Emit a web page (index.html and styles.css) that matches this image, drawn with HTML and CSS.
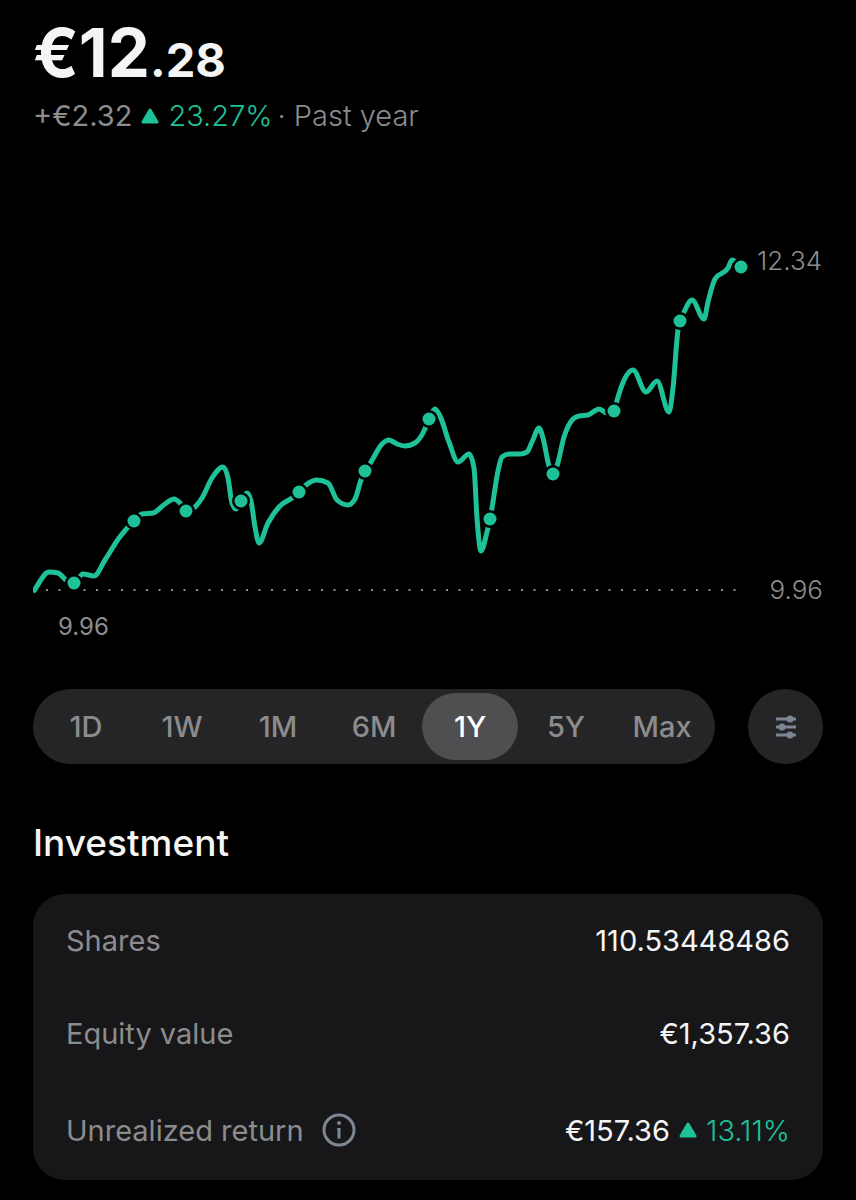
FILE: index.html
```html
<!DOCTYPE html>
<html lang="en">
<head>
  <meta charset="UTF-8" />
  <meta name="viewport" content="width=device-width, initial-scale=1" />
  <title>Stock Details</title>
  <link rel="stylesheet" href="styles.css">
</head>
<body>

  <header>
    <h1 class="price">€12<span class="cents">.28</span></h1>
    <p class="change">
      <span class="amount">+€2.32</span>
      <svg class="arrow" viewBox="0 0 18 16" aria-hidden="true"><path d="M9 2 L16 14 H2 Z" /></svg>
      <span class="up">23.27%</span>
      <span>· Past year</span>
    </p>
  </header>

  <main>
    <svg class="chart" viewBox="33 240 790 410" role="img" aria-label="Price over the past year">
      <line class="baseline" x1="46" y1="590" x2="736" y2="590" />
      <path class="line" id="priceLine" />
      <g class="dots" id="priceDots"></g>
      <text class="label" x="822" y="270" text-anchor="end">12.34</text>
      <text class="label" x="823" y="599" text-anchor="end">9.96</text>
      <text class="label small" x="58" y="635">9.96</text>
    </svg>

    <div class="controls">
      <div class="ranges">
        <button type="button">1D</button>
        <button type="button">1W</button>
        <button type="button">1M</button>
        <button type="button">6M</button>
        <button type="button" class="active">1Y</button>
        <button type="button">5Y</button>
        <button type="button">Max</button>
      </div>
      <button type="button" class="settings" aria-label="Chart settings">
        <svg viewBox="0 0 22 24" aria-hidden="true">
          <path d="M1 4 H21 M1 12 H21 M1 20 H21" />
          <circle cx="15" cy="4" r="3.5" />
          <circle cx="7" cy="12" r="3.5" />
          <circle cx="15" cy="20" r="3.5" />
        </svg>
      </button>
    </div>

    <h2>Investment</h2>
    <dl class="card">
      <div class="row">
        <dt>Shares</dt>
        <dd>110.53448486</dd>
      </div>
      <div class="row">
        <dt>Equity value</dt>
        <dd>€1,357.36</dd>
      </div>
      <div class="row">
        <dt>
          Unrealized return
          <button type="button" class="info" aria-label="About unrealized return">
            <svg viewBox="0 0 34 34" aria-hidden="true">
              <circle class="ring" cx="17" cy="17" r="15" />
              <circle cx="17" cy="10" r="2" />
              <path d="M15 15 H18.5 V25.5 H15.5 V16.5 H15 Z" />
            </svg>
          </button>
        </dt>
        <dd>
          €157.36
          <svg class="arrow" viewBox="0 0 18 16" aria-hidden="true"><path d="M9 2 L16 14 H2 Z" /></svg>
          <span class="up">13.11%</span>
        </dd>
      </div>
    </dl>
  </main>

  <script src="chart.js"></script>
</body>
</html>
```

FILE: styles.css
```css
* { box-sizing: border-box; }

body {
  margin: 0;
  padding: 19px 33px;
  background-color: #000;
  color: #f5f5f5;
  font-family: Inter, "Liberation Sans", sans-serif;
  font-size: 29px;
  line-height: 37px;
}

button {
  padding: 0;
  border: none;
  background: none;
  color: #8c8c8e;
  font: inherit;
  cursor: pointer;
}

.price {
  margin: 0;
  font-size: 67px;
  line-height: 68px;
  font-weight: 700;
}
.cents { font-size: 47px; }

.change {
  display: flex;
  align-items: center;
  gap: 5px;
  margin: 3px 0 0;
  color: #8c8c8e;
  font-weight: 300;
}
.amount { font-weight: 400; }
.up {
  color: #1ec198;
  font-weight: 300;
}
.arrow {
  width: 18px;
  height: 16px;
  margin: 0 4px;
  fill: #1ec198;
  stroke: #1ec198;
  stroke-width: 3;
  stroke-linejoin: round;
}

.chart {
  display: block;
  width: 100%;
  margin-top: 106px;
}
.baseline {
  stroke: #8c8c8e;
  stroke-width: 2;
  stroke-dasharray: 2 10.5;
}
.line {
  fill: none;
  stroke: #1ec198;
  stroke-width: 5;
  stroke-linejoin: round;
}
.dots circle {
  fill: #1ec198;
  stroke: #000;
  stroke-width: 5;
  paint-order: stroke;
}
.label {
  fill: #8c8c8e;
  font-size: 26px;
  font-weight: 300;
}
.label.small {
  font-size: 24px;
  font-weight: 400;
}

.controls {
  display: flex;
  gap: 33px;
  margin-top: 39px;
}
.ranges {
  flex: 1;
  display: flex;
  height: 75px;
  padding: 4px 5px;
  border-radius: 38px;
  background-color: #252527;
}
.ranges button {
  flex: 1;
  border-radius: 34px;
  font-weight: 500;
}
.ranges .active {
  background-color: #4f4f51;
  color: #fff;
}
.settings {
  display: flex;
  align-items: center;
  justify-content: center;
  width: 75px;
  height: 75px;
  border-radius: 50%;
  background-color: #252527;
}
.settings svg {
  width: 22px;
  height: 24px;
  fill: #7d8793;
}
.settings path {
  stroke: #7d8793;
  stroke-width: 3;
}

h2 {
  margin: 56px 0 28px;
  font-size: 37px;
  line-height: 46px;
  font-weight: 500;
}

.card {
  margin: 0;
  padding: 0 33px;
  border-radius: 32px;
  background-color: #171719;
}
.row {
  display: flex;
  justify-content: space-between;
  align-items: center;
  padding: 28px 0;
}
dt {
  display: flex;
  align-items: center;
  gap: 13px;
  color: #8c8c8e;
}
dd {
  display: flex;
  align-items: center;
  gap: 5px;
  margin: 0;
}
.info {
  display: flex;
  align-items: center;
  justify-content: center;
  width: 44px;
  height: 44px;
}
.info svg {
  width: 34px;
  height: 34px;
  fill: #7d8793;
}
.info .ring {
  fill: none;
  stroke: #7d8793;
  stroke-width: 3;
}
```

FILE: chart.js
```javascript
const points = [
  [33, 592], [49, 572], [58, 573], [66, 580], [74, 583], [83, 574], [94, 576], [105, 560],
  [119, 538], [134, 521], [142, 514], [153, 513], [165, 504], [174, 499], [181, 504],
  [187, 511], [196, 506], [202, 498], [212, 478], [223, 467], [228, 478], [232, 503],
  [236, 509], [241, 501], [247, 493], [251, 501], [255, 527], [259, 543], [268, 523],
  [280, 506], [292, 498], [299, 492], [306, 485], [317, 480], [328, 483], [337, 500],
  [348, 505], [355, 499], [361, 480], [365, 471], [371, 462], [382, 444], [389, 440],
  [397, 444], [405, 446], [415, 443], [424, 431], [429, 419], [435, 409], [440, 416],
  [449, 442], [458, 462], [469, 454], [474, 468], [477, 518], [481, 551], [487, 532],
  [490, 519], [492, 508], [498, 471], [502, 457], [509, 454], [520, 454], [527, 452],
  [532, 442], [539, 428], [543, 438], [549, 466], [553, 474], [557, 466], [564, 437],
  [573, 419], [579, 416], [588, 415], [599, 409], [607, 413], [614, 411], [616, 404],
  [622, 385], [633, 370], [646, 392], [657, 381], [669, 412], [673, 388], [678, 330],
  [680, 321], [684, 312], [692, 300], [704, 319], [708, 302], [715, 279], [728, 268],
  [732, 260], [741, 267]
];

const dots = [
  [74, 583], [134, 521], [186, 511], [241, 501], [299, 492], [365, 471], [429, 419],
  [490, 519], [553, 474], [614, 411], [680, 321], [741, 267]
];

// slope at each point, flat at every local high and low
function getSlopes(pts) {
  return pts.map((p, i) => {
    if (i === 0) return (pts[1][1] - p[1]) / (pts[1][0] - p[0]);
    if (i === pts.length - 1) return (p[1] - pts[i - 1][1]) / (p[0] - pts[i - 1][0]);
    const h0 = p[0] - pts[i - 1][0];
    const h1 = pts[i + 1][0] - p[0];
    const s0 = (p[1] - pts[i - 1][1]) / h0;
    const s1 = (pts[i + 1][1] - p[1]) / h1;
    if (s0 * s1 <= 0) return 0;
    const mid = (s0 * h1 + s1 * h0) / (h0 + h1);
    return Math.sign(s0) * Math.min(2 * Math.abs(s0), 2 * Math.abs(s1), Math.abs(mid));
  });
}

function buildPath(pts) {
  const slopes = getSlopes(pts);
  let d = `M${pts[0][0]} ${pts[0][1]}`;
  for (let i = 1; i < pts.length; i++) {
    const [x0, y0] = pts[i - 1];
    const [x1, y1] = pts[i];
    const step = (x1 - x0) / 3;
    d += ` C${x0 + step} ${y0 + slopes[i - 1] * step} ${x1 - step} ${y1 - slopes[i] * step} ${x1} ${y1}`;
  }
  return d;
}

document.getElementById('priceLine').setAttribute('d', buildPath(points));

document.getElementById('priceDots').innerHTML = dots
  .map(([x, y]) => `<circle cx="${x}" cy="${y}" r="6.5" />`)
  .join('');
```
